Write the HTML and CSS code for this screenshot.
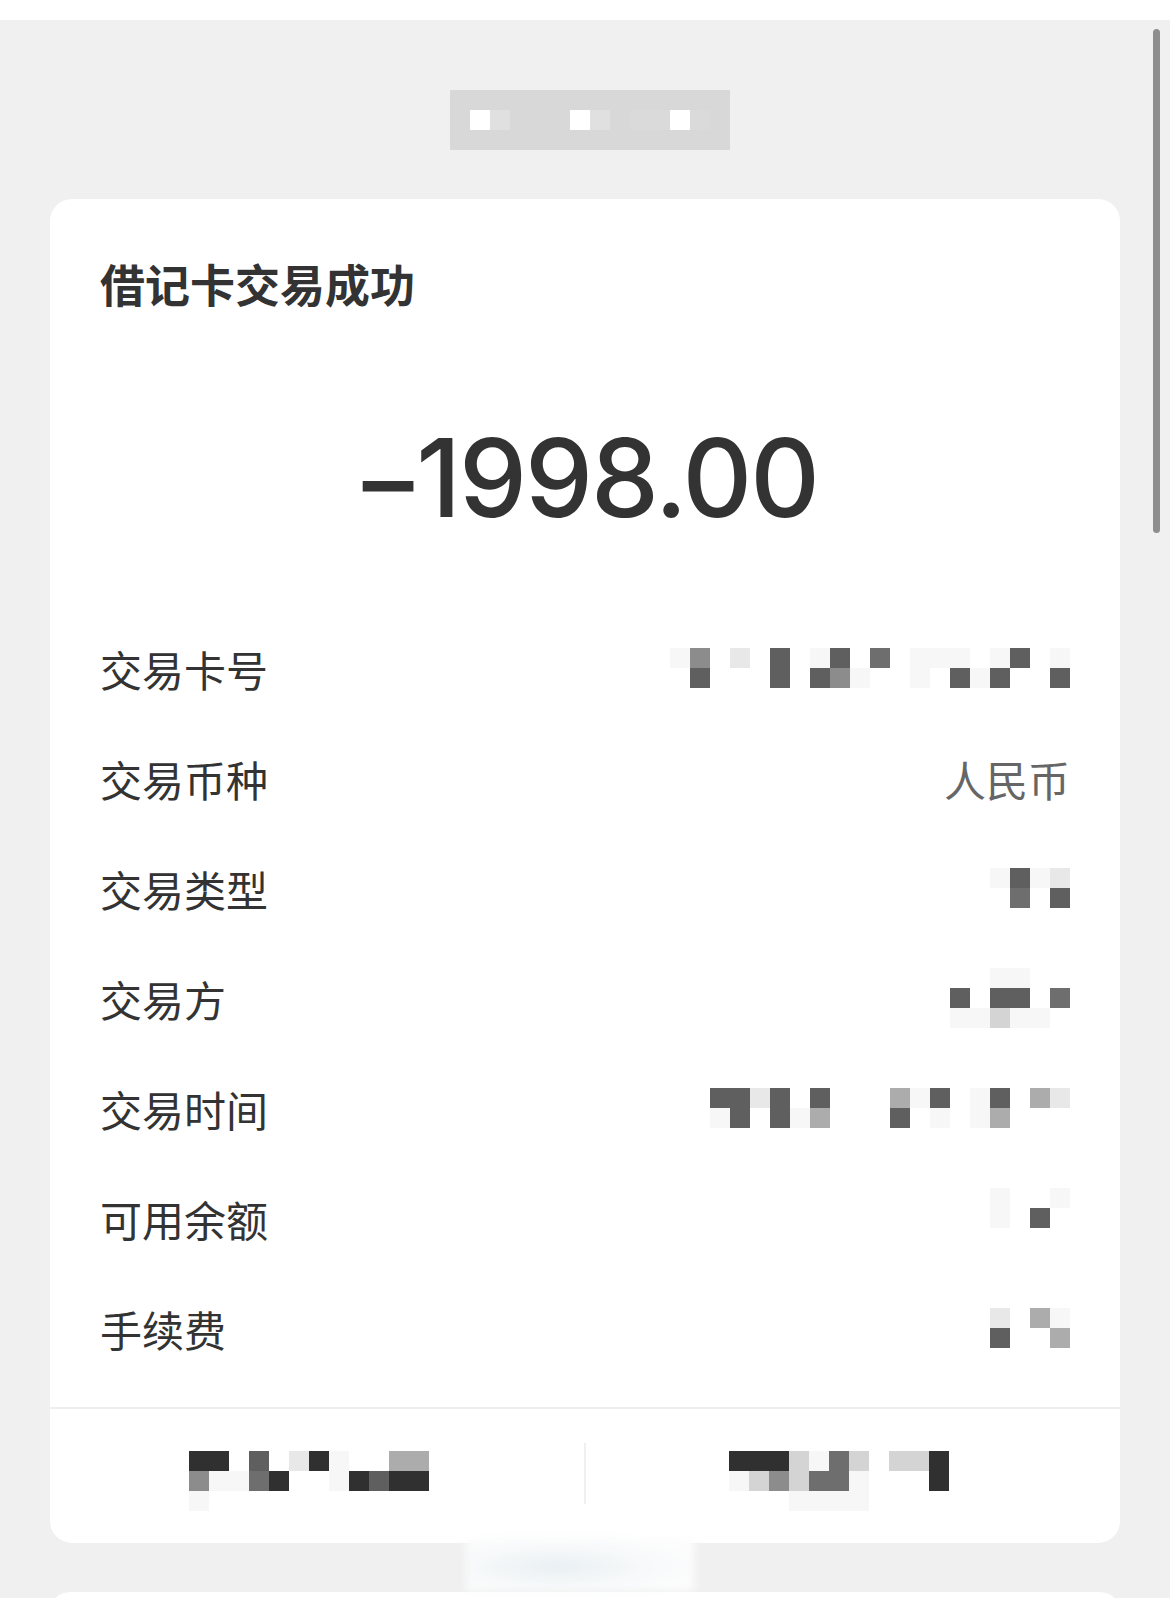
FILE: index.html
```
<!DOCTYPE html>
<html lang="zh-CN">
<head>
    <meta charset="UTF-8">
    <meta name="viewport" content="width=device-width, initial-scale=1.0">
    <title>交易详情</title>
    <link rel="stylesheet" href="styles.css">
</head>
<body>
    <div class="status-bar"></div>
    <div class="scroll-thumb"></div>

    <div class="header">
        <!-- bank name, pixelated in the original -->
        <div class="mosaic header-mosaic">
            <div><i></i><i></i><i></i><i></i><i></i><i></i><i></i><i></i><i></i><i></i><i></i><i></i><i></i><i></i></div>
            <div><i></i><i class="w"></i><i class="e"></i><i></i><i></i><i></i><i class="w"></i><i class="e"></i><i></i><i class="n"></i><i class="n"></i><i class="w"></i><i class="n"></i><i></i></div>
            <div><i></i><i></i><i></i><i></i><i></i><i></i><i></i><i></i><i></i><i></i><i></i><i></i><i></i><i></i></div>
        </div>
    </div>

    <div class="page">
        <div class="card">
            <h1 class="card-title">借记卡交易成功</h1>
            <div class="amount"><span class="minus">&minus;</span>1998.00</div>

            <div class="details">
                <div class="row">
                    <span class="label">交易卡号</span>
                    <div class="mosaic">
                        <div><i class="f"></i><i class="m"></i><i></i><i class="l"></i><i></i><i class="d"></i><i></i><i class="f"></i><i class="d"></i><i></i><i class="g"></i><i></i><i class="f"></i><i class="f"></i><i class="f"></i><i></i><i class="f"></i><i class="d"></i><i></i><i class="f"></i></div>
                        <div><i></i><i class="d"></i><i></i><i></i><i></i><i class="d"></i><i></i><i class="d"></i><i class="m"></i><i class="f"></i><i></i><i></i><i class="f"></i><i></i><i class="d"></i><i class="f"></i><i class="d"></i><i></i><i></i><i class="d"></i></div>
                    </div>
                </div>
                <div class="row">
                    <span class="label">交易币种</span>
                    <span class="value">人民币</span>
                </div>
                <div class="row">
                    <span class="label">交易类型</span>
                    <div class="mosaic">
                        <div><i class="f"></i><i class="d"></i><i class="f"></i><i class="l"></i></div>
                        <div><i></i><i class="g"></i><i></i><i class="d"></i></div>
                    </div>
                </div>
                <div class="row">
                    <span class="label">交易方</span>
                    <div class="mosaic">
                        <div><i></i><i></i><i class="f"></i><i class="f"></i><i></i><i></i></div>
                        <div><i class="d"></i><i></i><i class="d"></i><i class="d"></i><i></i><i class="g"></i></div>
                        <div><i class="f"></i><i class="f"></i><i class="p"></i><i class="f"></i><i class="f"></i><i></i></div>
                    </div>
                </div>
                <div class="row">
                    <span class="label">交易时间</span>
                    <div class="mosaic">
                        <div><i class="d"></i><i class="d"></i><i class="l"></i><i class="d"></i><i></i><i class="d"></i><i></i><i></i><i></i><i class="s"></i><i class="f"></i><i class="d"></i><i></i><i class="f"></i><i class="d"></i><i></i><i class="s"></i><i class="l"></i></div>
                        <div><i class="f"></i><i class="d"></i><i></i><i class="d"></i><i class="f"></i><i class="s"></i><i></i><i></i><i></i><i class="d"></i><i></i><i class="f"></i><i></i><i class="f"></i><i class="s"></i><i></i><i></i><i></i></div>
                    </div>
                </div>
                <div class="row">
                    <span class="label">可用余额</span>
                    <div class="mosaic">
                        <div><i class="f"></i><i></i><i></i><i class="f"></i></div>
                        <div><i class="f"></i><i></i><i class="d"></i><i></i></div>
                        <div><i></i><i></i><i></i><i></i></div>
                    </div>
                </div>
                <div class="row">
                    <span class="label">手续费</span>
                    <div class="mosaic">
                        <div><i class="l"></i><i></i><i class="s"></i><i class="f"></i></div>
                        <div><i class="d"></i><i></i><i></i><i class="s"></i></div>
                    </div>
                </div>
            </div>

            <div class="actions">
                <div class="action">
                    <div class="mosaic">
                        <div><i class="k"></i><i class="k"></i><i></i><i class="d"></i><i></i><i class="l"></i><i class="k"></i><i class="f"></i><i></i><i></i><i class="s"></i><i class="s"></i></div>
                        <div><i class="m"></i><i class="f"></i><i class="f"></i><i class="g"></i><i class="k"></i><i></i><i></i><i class="f"></i><i class="k"></i><i class="d"></i><i class="k"></i><i class="k"></i></div>
                        <div><i class="f"></i><i></i><i></i><i></i><i></i><i></i><i></i><i></i><i></i><i></i><i></i><i></i></div>
                    </div>
                </div>
                <div class="action-divider"></div>
                <div class="action action-right">
                    <div class="mosaic">
                        <div><i class="k"></i><i class="k"></i><i class="k"></i><i class="p"></i><i class="f"></i><i class="g"></i><i class="p"></i><i></i><i class="p"></i><i class="p"></i><i class="k"></i></div>
                        <div><i class="f"></i><i class="p"></i><i class="m"></i><i class="p"></i><i class="g"></i><i class="g"></i><i class="f"></i><i></i><i></i><i></i><i class="k"></i></div>
                        <div><i></i><i></i><i></i><i class="f"></i><i class="f"></i><i class="f"></i><i class="f"></i><i></i><i></i><i></i><i></i></div>
                    </div>
                </div>
            </div>
        </div>

        <div class="gap">
            <div class="blur-logo"></div>
        </div>

        <div class="card next"></div>
    </div>
</body>
</html>
```
FILE: styles.css
```
html, body {
    overflow: hidden;
}

body {
    margin: 0;
    background: #f0f0f0;
    font-family: "Noto Sans CJK SC", sans-serif;
    color: #333;
    position: relative;
}

.status-bar {
    height: 20px;
    background: #fff;
}

.scroll-thumb {
    position: absolute;
    top: 29px;
    left: 1153px;
    width: 7px;
    height: 504px;
    border-radius: 4px;
    background: #8e8e8e;
}

.header {
    height: 179px;
    box-sizing: border-box;
    padding-top: 70px;
    padding-left: 10px;
    display: flex;
    justify-content: center;
    align-items: flex-start;
}

.page {
    padding: 0 50px;
}

.card {
    background: #fff;
    border-radius: 22px;
}

.card-title {
    margin: 0;
    padding: 55px 50px 0;
    font-size: 45px;
    font-weight: bold;
    line-height: 60px;
    color: #333;
}

.amount {
    margin-top: 99px;
    text-align: center;
    font-family: "Inter", "Liberation Sans", sans-serif;
    font-size: 108px;
    font-weight: 500;
    letter-spacing: -2px;
    line-height: 130px;
    color: #333;
}

.minus {
    margin-right: -6px;
}

.details {
    margin-top: 70px;
    padding: 0 50px 24px;
}

.row {
    height: 110px;
    display: flex;
    justify-content: space-between;
    align-items: center;
}

.label {
    font-size: 42px;
    color: #333;
}

.value {
    font-size: 42px;
    color: #666;
}

.actions {
    height: 134px;
    border-top: 2px solid #eee;
    display: flex;
    align-items: center;
}

.action {
    flex: 1;
    display: flex;
    justify-content: center;
    padding-right: 16px;
}

.action .mosaic {
    margin-top: 10px;
}

.action-right .mosaic {
    margin-right: 12px;
}

.action-divider {
    width: 2px;
    height: 61px;
    background: #f0f0f0;
    margin-top: -6px;
}

/* pixelated blocks over private data */
.mosaic > div {
    display: flex;
}

.mosaic i {
    display: block;
    width: 20px;
    height: 20px;
}

.mosaic .k { background: #303030; }
.mosaic .d { background: #5f5f5f; }
.mosaic .g { background: #6e6e6e; }
.mosaic .m { background: #8c8c8c; }
.mosaic .s { background: #acacac; }
.mosaic .p { background: #d4d4d4; }
.mosaic .l { background: #e8e8e8; }
.mosaic .f { background: #f7f7f7; }

.header-mosaic {
    background: #d8d8d8;
}

.header-mosaic .w { background: #fff; }
.header-mosaic .e { background: #e0e0e0; }
.header-mosaic .n { background: #dadada; }

.gap {
    height: 49px;
    display: flex;
    justify-content: center;
}

.blur-logo {
    width: 228px;
    height: 54px;
    margin-top: -6px;
    margin-left: -10px;
    background: radial-gradient(ellipse at 40% 55%, #e8eff2 0%, #f7f9fa 45%, #fdfdfd 80%);
    filter: blur(4px);
}

.card.next {
    height: 40px;
}
```
